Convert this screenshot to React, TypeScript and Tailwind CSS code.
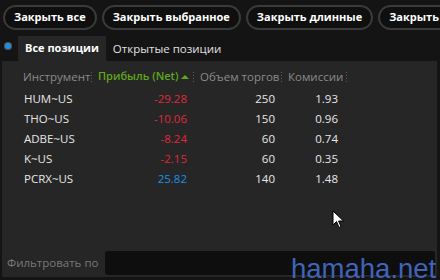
import React from "react";

const rows = [
  { s: "HUM~US", p: "-29.28", v: "250", c: "1.93", neg: true },
  { s: "THO~US", p: "-10.06", v: "150", c: "0.96", neg: true },
  { s: "ADBE~US", p: "-8.24", v: "60", c: "0.74", neg: true },
  { s: "K~US", p: "-2.15", v: "60", c: "0.35", neg: true },
  { s: "PCRX~US", p: "25.82", v: "140", c: "1.48", neg: false },
];

function Sep() {
  return (
    <div className="flex flex-col gap-[2px] w-[1px] ml-[4px] mr-[6px] shrink-0">
      <div className="w-[1px] h-[1px] bg-[#5a5a5a]" />
      <div className="w-[1px] h-[1px] bg-[#5a5a5a]" />
      <div className="w-[1px] h-[1px] bg-[#5a5a5a]" />
      <div className="w-[1px] h-[1px] bg-[#5a5a5a]" />
    </div>
  );
}

export default function App() {
  const font = { fontFamily: '"Open Sans", "Noto Sans", sans-serif' };
  return (
    <div className="relative w-[440px] h-[280px] bg-[#141414] overflow-hidden" style={font}>
      <div className="flex gap-[5px] pl-[3px] pt-[5px] whitespace-nowrap">
        {["Закрыть все", "Закрыть выбранное", "Закрыть длинные", "Закрыть короткие"].map((t) => (
          <div
            key={t}
            className="h-[25px] shrink-0 rounded-full border-2 border-[#3a3a3a] bg-[#0f0f0f] px-[9px] flex items-center text-white text-[11px] font-bold"
          >
            {t}
          </div>
        ))}
      </div>
      <div className="flex items-center mt-[6px] h-[25px] whitespace-nowrap">
        <div className="w-[18px] flex justify-center">
          <div className="w-[6px] h-[6px] rounded-full bg-[#1e8fe0] ring-1 ring-[#555] mt-[-6px] ml-[-2px]" />
        </div>
        <div className="h-[25px] px-[7px] bg-[#262626] flex items-center text-white text-[11px] font-bold">
          Все позиции
        </div>
        <div className="px-[7px] text-[#e0e0e0] text-[11.5px]">Открытые позиции</div>
      </div>
      <div className="ml-[2px] mr-[3px] h-[216px] bg-[#262626] flex flex-col">
        <div className="flex items-center h-[28px] pt-[3px] text-[11.5px] text-[#8a8a8a] whitespace-nowrap">
          <div className="pl-[21px] w-[85px] shrink-0">Инструмент</div>
          <Sep />
          <div className="text-[#5ea81c] font-semibold flex items-center w-[91px] shrink-0 text-[11px]">
            Прибыль (Net)
            <svg width="8" height="6" viewBox="0 0 8 6" className="ml-[3px] shrink-0">
              <path d="M0 5 L4 1 L8 5 Z" fill="#5ea81c" />
            </svg>
          </div>
          <Sep />
          <div className="w-[77px] shrink-0">Объем торгов</div>
          <Sep />
          <div className="w-[54px] shrink-0">Комиссии</div>
          <Sep />
        </div>
        <div className="flex flex-col text-[11.5px]">
          {rows.map((r) => (
            <div key={r.s} className="flex h-[20px] items-center">
              <div className="pl-[22px] w-[125px] text-[#e6e6e6]">{r.s}</div>
              <div className={"w-[60px] text-right " + (r.neg ? "text-[#e0283a]" : "text-[#1e90e6]")}>{r.p}</div>
              <div className="w-[88px] text-right text-[#e6e6e6]">{r.v}</div>
              <div className="w-[63px] text-right text-[#e6e6e6]">{r.c}</div>
            </div>
          ))}
        </div>
        <div className="flex-1" />
        <div className="flex items-center h-[25px] mb-[2px] whitespace-nowrap">
          <div className="pl-[5px] w-[103px] text-[11.5px] text-[#777]">Фильтровать по</div>
          <div className="flex-1 h-[24px] mr-[2px] rounded-[3px] bg-[#0e0e0e]" />
        </div>
      </div>
      <svg className="absolute left-[332px] top-[210px]" width="14" height="20" viewBox="0 0 14 20">
        <path d="M1 1 L1 15 L4.5 11.5 L7 17.5 L9 16.7 L6.6 11 L11.5 11 Z" fill="#fff" stroke="#000" strokeWidth="1" />
      </svg>
      <div
        className="absolute left-[291px] top-[255px] text-[#3f64b8] text-[27.5px] leading-none whitespace-nowrap"
        style={{ fontFamily: '"Liberation Sans", Arial, sans-serif' }}
      >
        hamaha.net
      </div>
    </div>
  );
}
